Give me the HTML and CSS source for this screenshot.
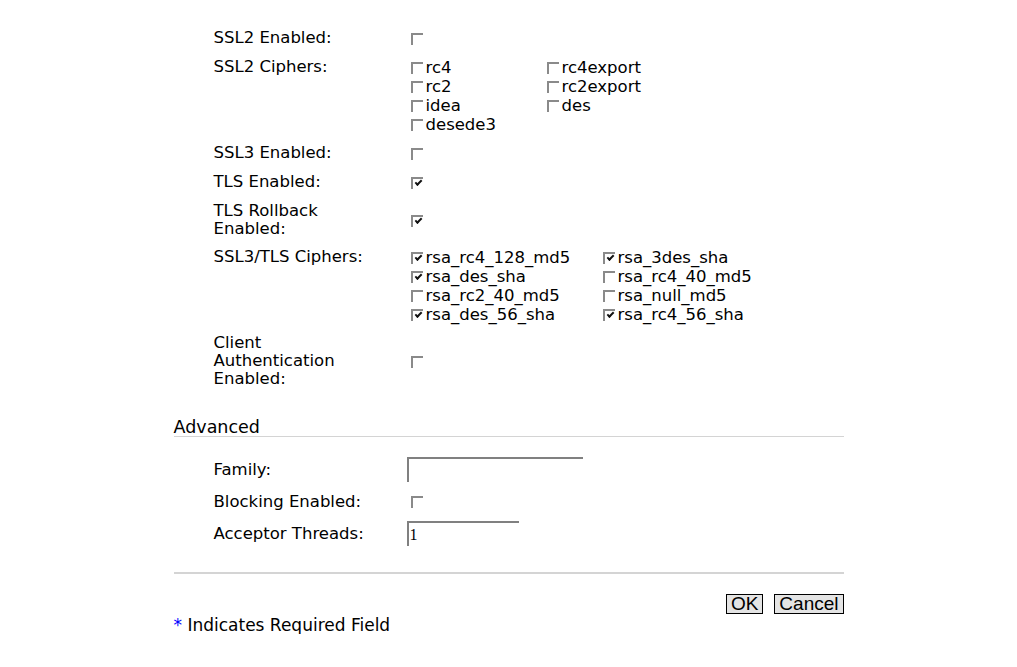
FILE: index.html
```html
<!DOCTYPE html>
<html lang="en">
<head>
    <meta charset="utf-8">
    <title>SSL Settings</title>
    <link rel="stylesheet" href="styles.css">
</head>
<body>
    <div class="page">
        <table class="form-table">
            <tr>
                <td class="label">SSL2 Enabled:</td>
                <td><input type="checkbox"></td>
            </tr>
            <tr>
                <td class="label">SSL2 Ciphers:</td>
                <td>
                    <div class="cipher-grid ssl2">
                        <label><input type="checkbox">rc4</label>
                        <label><input type="checkbox">rc4export</label>
                        <label><input type="checkbox">rc2</label>
                        <label><input type="checkbox">rc2export</label>
                        <label><input type="checkbox">idea</label>
                        <label><input type="checkbox">des</label>
                        <label><input type="checkbox">desede3</label>
                    </div>
                </td>
            </tr>
            <tr>
                <td class="label">SSL3 Enabled:</td>
                <td><input type="checkbox"></td>
            </tr>
            <tr>
                <td class="label">TLS Enabled:</td>
                <td><input type="checkbox" checked></td>
            </tr>
            <tr>
                <td class="label">TLS Rollback Enabled:</td>
                <td><input type="checkbox" checked></td>
            </tr>
            <tr>
                <td class="label">SSL3/TLS Ciphers:</td>
                <td>
                    <div class="cipher-grid tls">
                        <label><input type="checkbox" checked>rsa_rc4_128_md5</label>
                        <label><input type="checkbox" checked>rsa_3des_sha</label>
                        <label><input type="checkbox" checked>rsa_des_sha</label>
                        <label><input type="checkbox">rsa_rc4_40_md5</label>
                        <label><input type="checkbox">rsa_rc2_40_md5</label>
                        <label><input type="checkbox">rsa_null_md5</label>
                        <label><input type="checkbox" checked>rsa_des_56_sha</label>
                        <label><input type="checkbox" checked>rsa_rc4_56_sha</label>
                    </div>
                </td>
            </tr>
            <tr>
                <td class="label">Client Authentication Enabled:</td>
                <td><input type="checkbox"></td>
            </tr>
        </table>

        <h3 class="section-title">Advanced</h3>

        <table class="form-table advanced">
            <tr>
                <td class="label">Family:</td>
                <td><input type="text" class="text-field wide"></td>
            </tr>
            <tr>
                <td class="label">Blocking Enabled:</td>
                <td><input type="checkbox"></td>
            </tr>
            <tr>
                <td class="label">Acceptor Threads:</td>
                <td><input type="text" class="text-field short" value="1"></td>
            </tr>
        </table>

        <div class="footer">
            <div class="buttons">
                <button type="button">OK</button>
                <button type="button">Cancel</button>
            </div>
            <p class="required-note"><span class="star">*</span> Indicates Required Field</p>
        </div>
    </div>
</body>
</html>
```

FILE: styles.css
```css
/* page */
body {
    margin: 0;
    background-color: #fff;
    color: #000;
    font-family: "DejaVu Sans", Verdana, sans-serif;
    font-size: 16.5px;
}

.page {
    width: 670px;
    margin: 0 auto;
    padding-top: 24px;
}

/* form rows */
.form-table {
    border-collapse: collapse;
    margin-left: 40px;
}

.form-table td {
    padding: 5px 0;
    line-height: 19px;
    vertical-align: middle;
}

.form-table td.label {
    width: 160px;
    padding-right: 33px;
    line-height: 18px;
    vertical-align: top;
}

.advanced td.label {
    vertical-align: middle;
}

/* checkbox look */
input[type="checkbox"] {
    -webkit-appearance: none;
    appearance: none;
    position: relative;
    width: 12px;
    height: 12px;
    margin: 0 3px 0 4px;
    border-top: 2px solid #8a8a8a;
    border-left: 2px solid #8a8a8a;
    border-right: 0;
    border-bottom: 0;
    background: #fff;
    vertical-align: -1px;
}

input[type="checkbox"]:checked::after {
    content: "";
    position: absolute;
    left: 2px;
    top: 1px;
    width: 5px;
    height: 2px;
    border-left: 2px solid #111;
    border-bottom: 2px solid #111;
    transform: rotate(-45deg);
}

.cipher-grid {
    display: grid;
    justify-content: start;
}

.cipher-grid.ssl2 {
    grid-template-columns: 136px auto;
}

.cipher-grid.tls {
    grid-template-columns: 192px auto;
}

.cipher-grid label {
    line-height: 19px;
    white-space: nowrap;
}

/* section header */
.section-title {
    font-size: 17.5px;
    font-weight: normal;
    margin: 25px 0 0;
    padding: 0;
    line-height: 18px;
    border-bottom: 1px solid #d4d4d4;
}

.advanced {
    margin-top: 15px;
}

/* text inputs */
.text-field {
    height: 25px;
    box-sizing: border-box;
    border-top: 2px solid #808080;
    border-left: 2px solid #808080;
    border-right: 0;
    border-bottom: 0;
    padding: 1px 1px 0;
    font-family: "Liberation Serif", serif;
    font-size: 16px;
    margin: 0;
    outline: none;
    vertical-align: middle;
}

.wide {
    width: 176px;
}

.short {
    width: 112px;
}

/* footer */
.footer {
    margin-top: 21px;
    border-top: 2px solid #d4d4d4;
    padding-top: 20px;
}

.buttons {
    text-align: right;
    font-size: 0;
}

button {
    font-family: "Liberation Sans", Arial, sans-serif;
    font-size: 19px;
    line-height: 18px;
    height: 20px;
    padding: 0 4px;
    margin-left: 11px;
    background-color: #e4e4e4;
    border: 1px solid #000;
    border-radius: 0;
    color: #000;
    vertical-align: top;
}

.required-note {
    margin: 2px 0 0;
    font-size: 17px;
    line-height: 18px;
}

.star {
    color: #0000ff;
}
```
